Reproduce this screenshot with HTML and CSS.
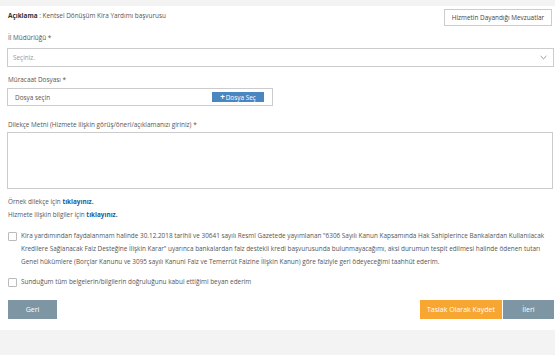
FILE: index.html
```html
<!DOCTYPE html>
<html lang="tr">
<head>
<meta charset="utf-8">
<link rel="stylesheet" href="styles.css">
</head>
<body>
<div class="page">
  <div class="top">
    <div class="desc"><b>Açıklama</b> : Kentsel Dönüşüm Kira Yardımı başvurusu</div>
    <button class="btn-outline">Hizmetin Dayandığı Mevzuatlar</button>
  </div>

  <div class="label l1">İl Müdürlüğü *</div>
  <div class="select">
    <span class="placeholder">Seçiniz.</span>
    <svg class="chev" width="7" height="5" viewBox="0 0 7 5"><path d="M0.6 1 L3.5 3.8 L6.4 1" fill="none" stroke="#888" stroke-width="0.9"/></svg>
  </div>

  <div class="label l2">Müracaat Dosyası *</div>
  <div class="file">
    <span>Dosya seçin</span>
    <span class="file-btn"><b class="plus">+</b> Dosya Seç</span>
  </div>

  <div class="label l3">Dilekçe Metni (Hizmete ilişkin görüş/öneri/açıklamanızı giriniz) *</div>
  <div class="textarea"></div>

  <div class="link-line first">Örnek dilekçe için <a class="lnk">tıklayınız.</a></div>
  <div class="link-line">Hizmete ilişkin bilgiler için <a class="lnk">tıklayınız.</a></div>

  <div class="check c1">
    <span class="box"></span>
    <p>Kira yardımından faydalanmam halinde 30.12.2018 tarihli ve 30641 sayılı Resmî Gazetede yayımlanan "6306 Sayılı Kanun Kapsamında Hak Sahiplerince Bankalardan Kullanılacak Kredilere Sağlanacak Faiz Desteğine İlişkin Karar" uyarınca bankalardan faiz destekli kredi başvurusunda bulunmayacağımı, aksi durumun tespit edilmesi halinde ödenen tutarı Genel hükümlere (Borçlar Kanunu ve 3095 sayılı Kanuni Faiz ve Temerrüt Faizine İlişkin Kanun) göre faiziyle geri ödeyeceğimi taahhüt ederim.</p>
  </div>
  <div class="check c2">
    <span class="box"></span>
    <p>Sunduğum tüm belgelerin/bilgilerin doğruluğunu kabul ettiğimi beyan ederim</p>
  </div>

  <div class="actions">
    <button class="btn gray back">Geri</button>
    <div class="right">
      <button class="btn orange">Taslak Olarak Kaydet</button>
      <button class="btn gray next">İleri</button>
    </div>
  </div>
</div>
</body>
</html>
```

FILE: styles.css
```css
* { box-sizing: border-box; }
html, body { margin: 0; padding: 0; }
body {
  background: #f3f3f3;
  font-family: "Open Sans", "DejaVu Sans", sans-serif;
  font-size: 6.4px;
  color: #555;
  width: 555px;
  height: 355px;
}
.page {
  margin-top: 6px;
  background: #fff;
  padding: 3px 1px 11px 7px;
  display: flex;
  flex-direction: column;
}
.top {
  display: flex;
  justify-content: space-between;
  align-items: flex-start;
}
.desc { line-height: 13px; padding-left: 1px; color: #555; }
.desc b { color: #333; font-weight: 700; }
.btn-outline {
  width: 108px;
  height: 17px;
  margin-right: 2px;
  padding: 0;
  border: 1px solid #ccc;
  background: #fff;
  font-family: inherit;
  font-size: 6.4px;
  color: #444;
  border-radius: 0;
}
.label { line-height: 10px; color: #555; padding-left: 1px; }
.l1 { margin-top: 7px; }
.l2 { margin-top: 8px; }
.l3 { margin-top: 14px; }
.select {
  margin-top: 5px;
  height: 19px;
  border: 1px solid #ccc;
  display: flex;
  align-items: center;
  justify-content: space-between;
  padding: 0 6px 0 5px;
}
.placeholder { color: #999; }
.file {
  margin-top: 3px;
  width: 266px;
  height: 18px;
  border: 1px solid #ccc;
  display: flex;
  align-items: center;
  justify-content: space-between;
  padding: 0 8px 0 7px;
  color: #555;
}
.file-btn {
  width: 52px;
  height: 10px;
  background: #4a86c0;
  color: #fff;
  display: flex;
  align-items: center;
  justify-content: center;
  gap: 1px;
  font-size: 6.4px;
}
.plus { font-size: 8px; line-height: 8px; font-weight: 700; }
.textarea {
  margin-top: 2px;
  height: 57px;
  border: 1px solid #ccc;
  margin-right: 1px;
}
.link-line { line-height: 13px; color: #555; padding-left: 1px; }
.link-line.first { margin-top: 6px; }
.lnk { color: #1f5a96; font-weight: 700; text-decoration: none; }
.check {
  display: flex;
  align-items: flex-start;
  gap: 4px;
  padding-left: 1px;
}
.c1 { margin-top: 8px; }
.c2 { margin-top: 7px; }
.box {
  flex: none;
  width: 9px;
  height: 9px;
  margin-top: 3px;
  border: 1px solid #bbb;
  border-radius: 1px;
  background: #fff;
}
.check p { margin: 0; line-height: 13px; color: #555; }
.actions {
  margin-top: 12px;
  display: flex;
  justify-content: space-between;
  padding-left: 1px;
}
.right { display: flex; gap: 1px; }
.btn {
  height: 19px;
  border: none;
  padding: 0;
  color: #fff;
  font-family: inherit;
  font-size: 7px;
}
.gray { background: #7e96a4; }
.back { width: 49px; }
.next { width: 51px; }
.orange { background: #f8a632; width: 82px; }
```
